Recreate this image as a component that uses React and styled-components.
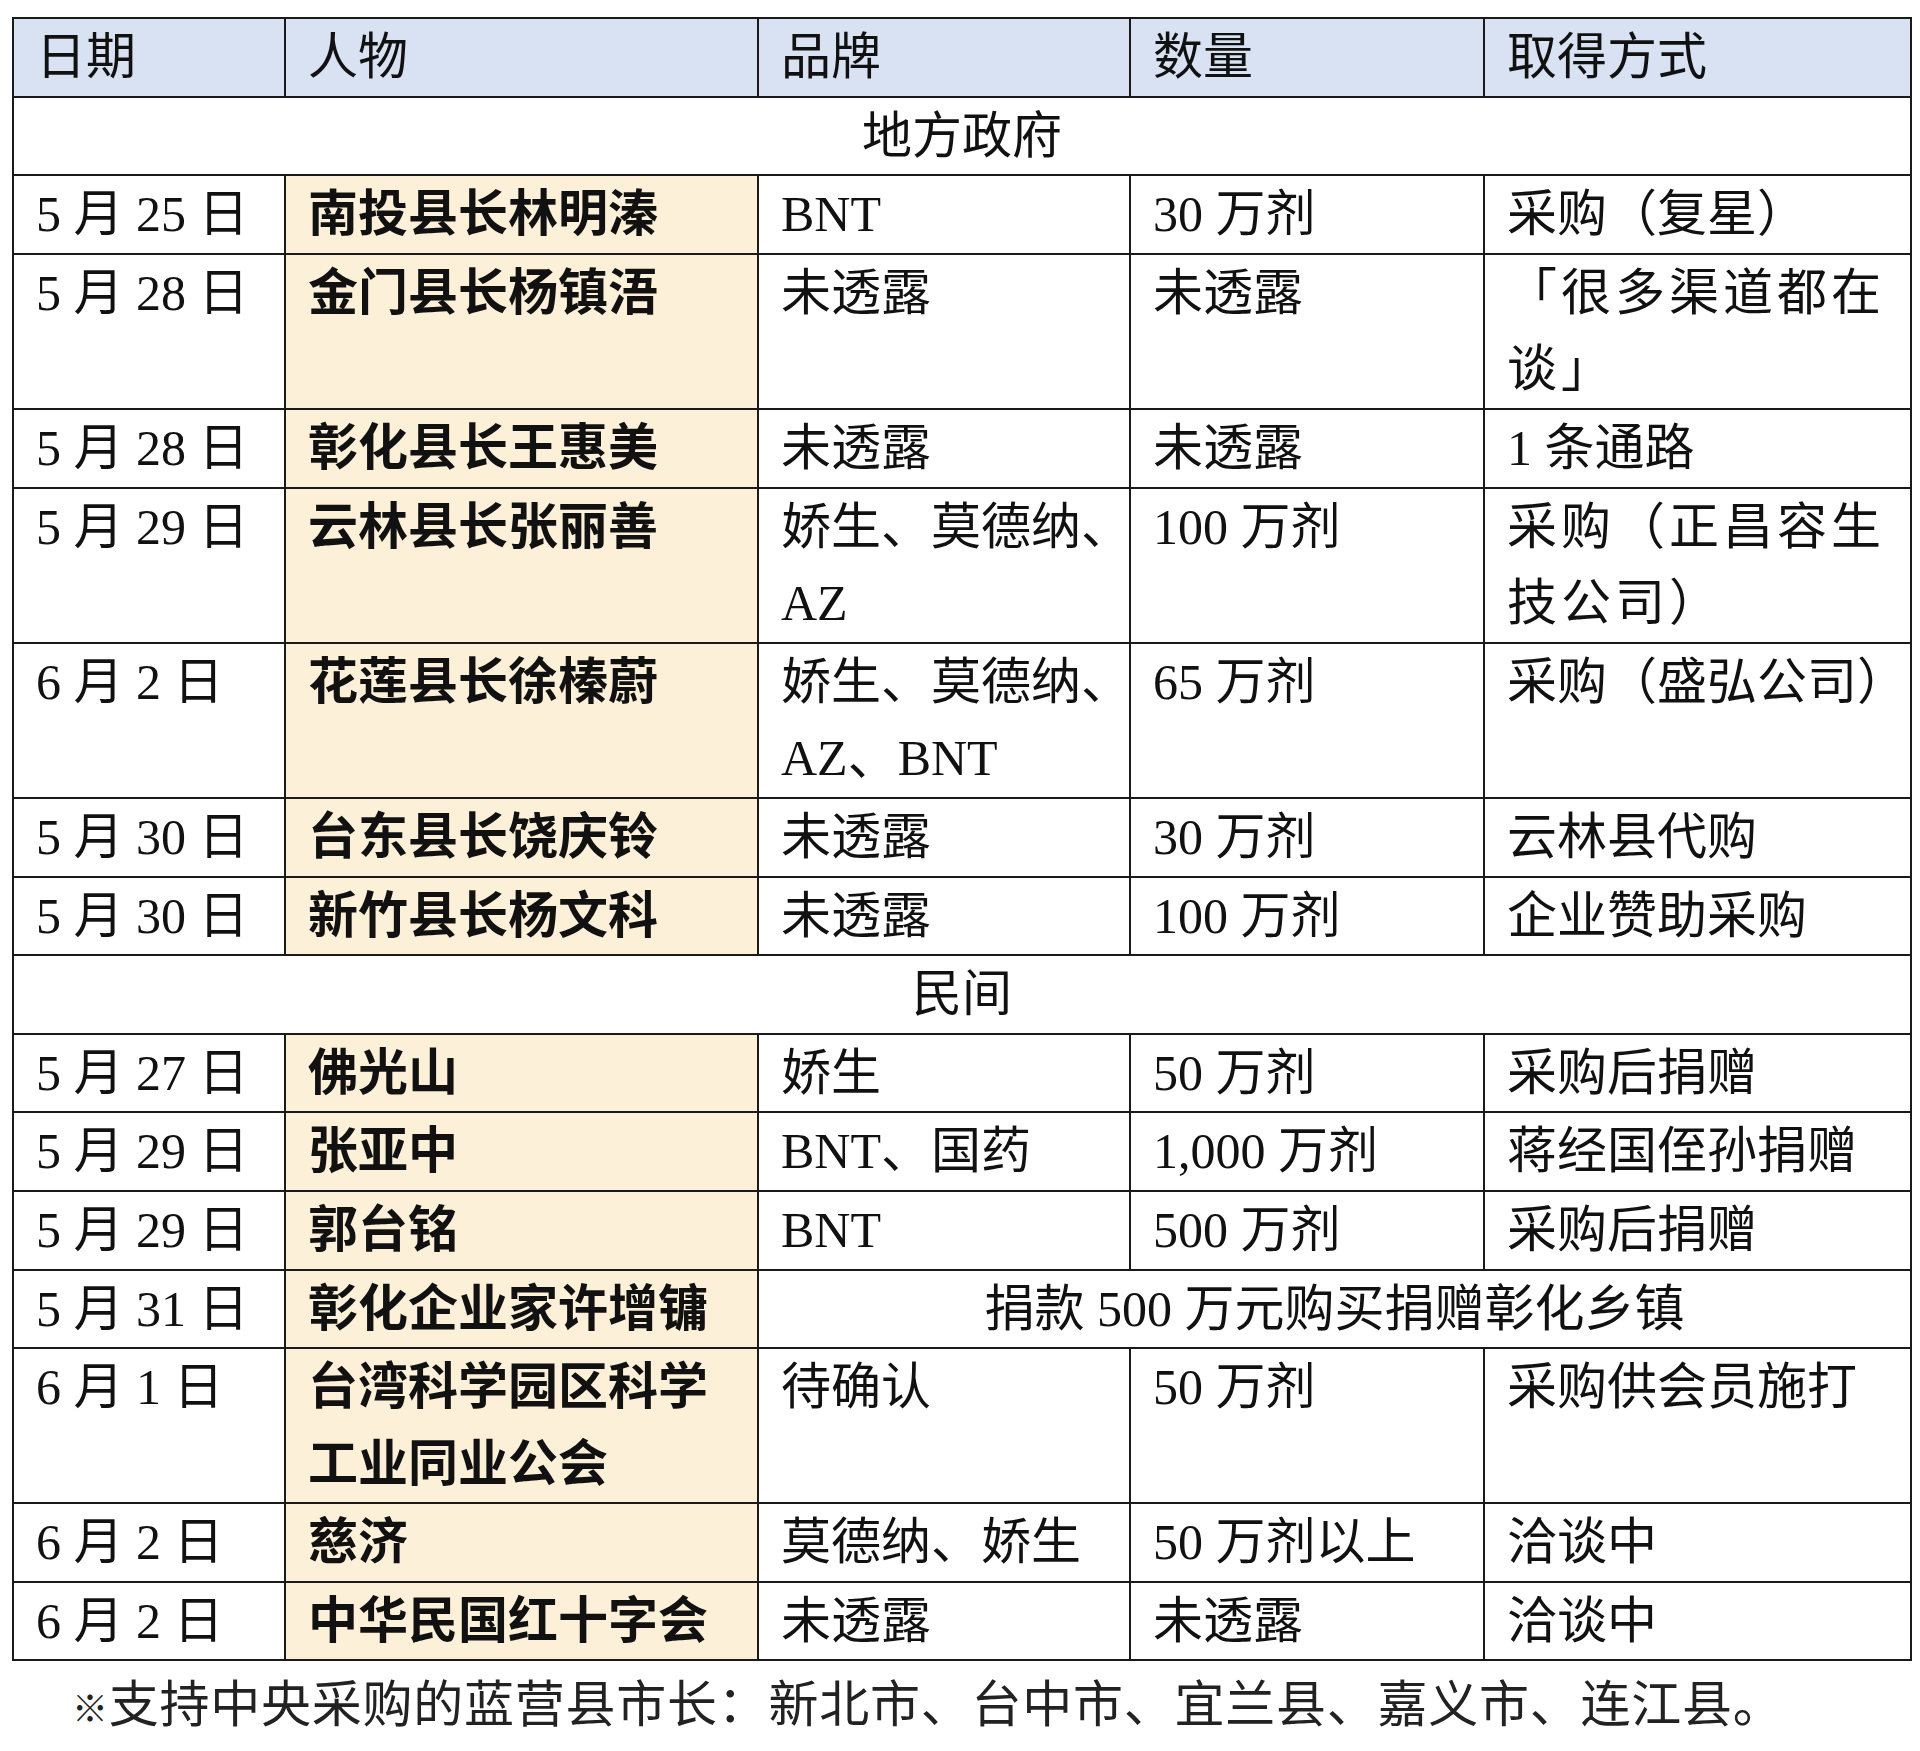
import React from "react";
import styled, { createGlobalStyle } from "styled-components";

const Global = createGlobalStyle`
  html, body { margin: 0; padding: 0; background: #ffffff; }
  body { font-family: "Liberation Serif", "Noto Sans CJK SC", serif; color: #111; }
`;

const Page = styled.div`
  padding: 17px 0 0 12px;
  width: 1920px;
  box-sizing: border-box;
`;

const Table = styled.table`
  border-collapse: collapse;
  table-layout: fixed;
  width: 1898px;
  font-family: "Liberation Serif", "Noto Sans CJK SC", serif;
  font-size: 50px;
  line-height: 76.6px;
  color: #111;
`;

const Th = styled.th`
  background: #d9e2f3;
  border: 2px solid #1a1a1a;
  padding: 0 22px;
  text-align: left;
  font-weight: 400;
  vertical-align: top;
  white-space: nowrap;
`;

const Td = styled.td`
  border: 2px solid #1a1a1a;
  padding: 0 22px;
  text-align: ${(p) => (p.$center ? "center" : "left")};
  vertical-align: top;
  white-space: nowrap;
  font-weight: ${(p) => (p.$bold ? 700 : 400)};
  background: ${(p) => (p.$name ? "#fdf0d8" : "#ffffff")};
  letter-spacing: ${(p) => (p.$spread ? "4px" : "normal")};
`;

const Note = styled.div`
  padding-left: 60px;
  font-family: "Noto Sans CJK SC", sans-serif;
  font-size: 50px;
  line-height: 78px;
  letter-spacing: 0.75px;
  color: #222;
  white-space: nowrap;
`;

const Mark = styled.span`
  font-size: 36px;
`;

const cols = [272, 473, 372, 354, 427];

const gov = [
  ["5 月 25 日", "南投县长林明溱", "BNT", "30 万剂", "采购（复星）"],
  ["5 月 28 日", "金门县长杨镇浯", "未透露", "未透露", ["「很多渠道都在", "谈」"], true],
  ["5 月 28 日", "彰化县长王惠美", "未透露", "未透露", "1 条通路"],
  ["5 月 29 日", "云林县长张丽善", ["娇生、莫德纳、", "AZ"], "100 万剂", ["采购（正昌容生", "技公司）"], true],
  ["6 月 2 日", "花莲县长徐榛蔚", ["娇生、莫德纳、", "AZ、BNT"], "65 万剂", "采购（盛弘公司）"],
  ["5 月 30 日", "台东县长饶庆铃", "未透露", "30 万剂", "云林县代购"],
  ["5 月 30 日", "新竹县长杨文科", "未透露", "100 万剂", "企业赞助采购"],
];

const civ = [
  ["5 月 27 日", "佛光山", "娇生", "50 万剂", "采购后捐赠"],
  ["5 月 29 日", "张亚中", "BNT、国药", "1,000 万剂", "蒋经国侄孙捐赠"],
  ["5 月 29 日", "郭台铭", "BNT", "500 万剂", "采购后捐赠"],
  ["5 月 31 日", "彰化企业家许增镛", null, null, null],
  ["6 月 1 日", ["台湾科学园区科学", "工业同业公会"], "待确认", "50 万剂", "采购供会员施打"],
  ["6 月 2 日", "慈济", "莫德纳、娇生", "50 万剂以上", "洽谈中"],
  ["6 月 2 日", "中华民国红十字会", "未透露", "未透露", "洽谈中"],
];

const Lines = ({ v }) =>
  Array.isArray(v) ? (
    <>
      {v.map((l, i) => (
        <React.Fragment key={i}>
          {i > 0 && <br />}
          {l}
        </React.Fragment>
      ))}
    </>
  ) : (
    v
  );

const Row = ({ r }) => (
  <tr>
    <Td>{r[0]}</Td>
    <Td $name $bold>
      <Lines v={r[1]} />
    </Td>
    {r[2] === null ? (
      <Td colSpan={3} $center>
        捐款 500 万元购买捐赠彰化乡镇
      </Td>
    ) : (
      <>
        <Td>
          <Lines v={r[2]} />
        </Td>
        <Td>{r[3]}</Td>
        <Td $spread={r[5]}>
          <Lines v={r[4]} />
        </Td>
      </>
    )}
  </tr>
);

export default function App() {
  return (
    <Page>
      <Global />
      <Table>
        <colgroup>
          {cols.map((w, i) => (
            <col key={i} style={{ width: w }} />
          ))}
        </colgroup>
        <thead>
          <tr>
            <Th>日期</Th>
            <Th>人物</Th>
            <Th>品牌</Th>
            <Th>数量</Th>
            <Th>取得方式</Th>
          </tr>
        </thead>
        <tbody>
          <tr>
            <Td colSpan={5} $center>地方政府</Td>
          </tr>
          {gov.map((r, i) => (
            <Row key={"g" + i} r={r} />
          ))}
          <tr>
            <Td colSpan={5} $center>民间</Td>
          </tr>
          {civ.map((r, i) => (
            <Row key={"c" + i} r={r} />
          ))}
        </tbody>
      </Table>
      <Note>
        <Mark>※</Mark>支持中央采购的蓝营县市长：新北市、台中市、宜兰县、嘉义市、连江县。
      </Note>
    </Page>
  );
}
